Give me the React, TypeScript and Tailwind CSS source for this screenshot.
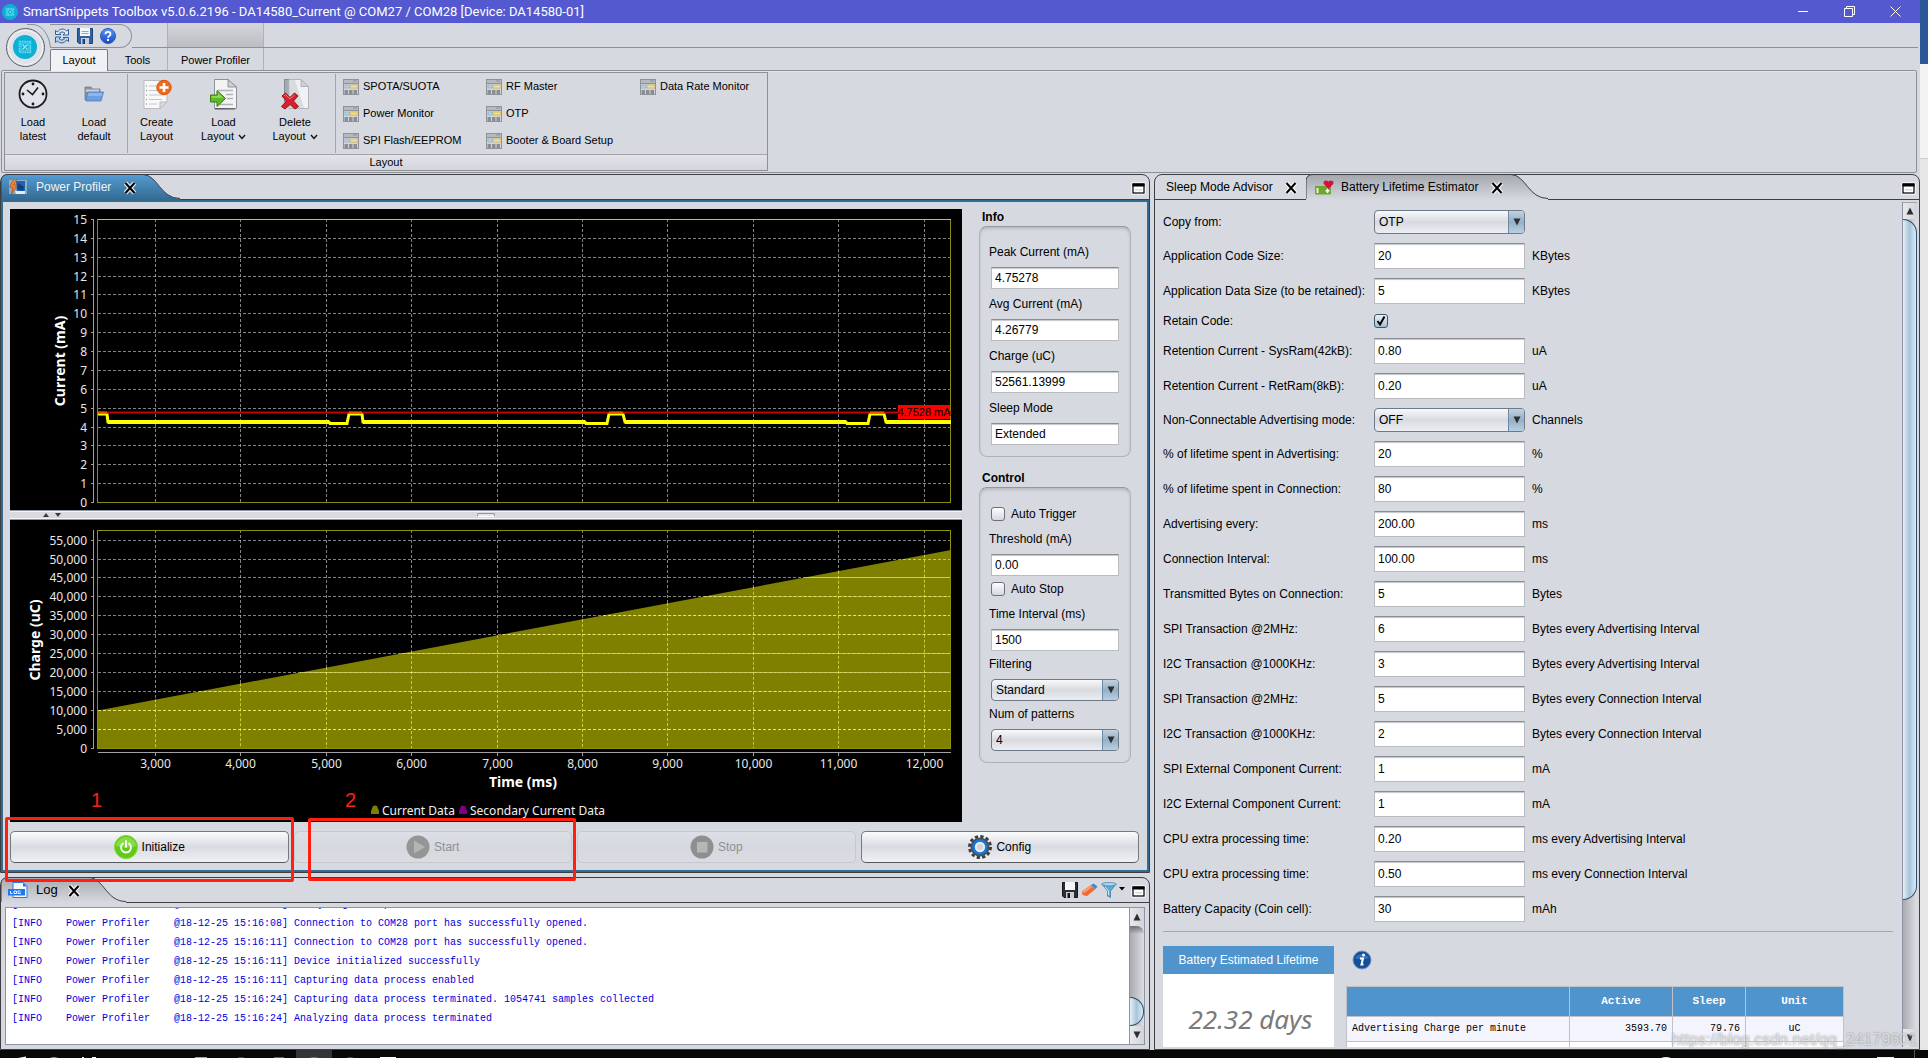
import React from "react";

/* ---------- small icons ---------- */

function ChipLogo({ className }: { className: string }) {
  return (
    <svg viewBox="0 0 24 24" className={className} aria-hidden="true">
      <circle cx="12" cy="12" r="12" fill="#0bb0d4" />
      <rect x="6.5" y="6.5" width="11" height="11" fill="none" stroke="#7fe0f2" strokeWidth="1.4" strokeDasharray="1.6 0.8" />
      <rect x="8" y="8" width="8" height="8" fill="none" stroke="#7fe0f2" strokeWidth="0.8" />
      <path d="M9.5 14.5l5-5M9.5 9.5l2 2M12.8 12.8l1.8 1.8" stroke="#a5ecf8" strokeWidth="1.1" />
    </svg>
  );
}

function OrbCurve() {
  return (
    <svg width="52" height="46" viewBox="0 0 52 46" className="absolute top-0 left-0" aria-hidden="true">
      <path d="M27 1.500H34C43 3 49 12 50.500 24.500" fill="none" stroke="#8e9097" />
      <circle cx="25.500" cy="24.500" r="19" fill="#dfe1e8" stroke="#5d5f66" />
      <circle cx="25.500" cy="24.500" r="17" fill="none" stroke="#f2f3f6" />
      <circle cx="25" cy="24" r="12" fill="#0bb0d4" />
      <rect x="19.500" y="18.500" width="11" height="11" fill="none" stroke="#6fdcf0" strokeWidth="1.500" strokeDasharray="1.600 0.800" />
      <rect x="21" y="20" width="8" height="8" fill="none" stroke="#6fdcf0" strokeWidth="0.800" />
      <path d="M22.500 26.500l5-5M22.500 21.500l2 2M25.800 24.800l1.800 1.800" stroke="#a5ecf8" strokeWidth="1.100" />
    </svg>
  );
}

function RefreshIcon() {
  return (
    <svg width="16" height="16" viewBox="0 0 16 16" aria-hidden="true">
      <path d="M1.500 6.500V2.500L3.500 4C6 .300 10 .300 12.500 3L14.500 1.500V7H9L11 5.200C9 3.500 7 3.600 5.500 5.200L7 6.500z" fill="#e3edf8" stroke="#2c5f9e" />
      <path d="M14.500 9.500V13.500L12.500 12C10 15.700 6 15.700 3.500 13L1.500 14.500V9H7L5 10.800C7 12.500 9 12.400 10.500 10.800L9 9.500z" fill="#bcd4ee" stroke="#2c5f9e" />
    </svg>
  );
}

function FloppyIcon({ dark }: { dark?: boolean }) {
  const body = dark ? "#2b2e33" : "#2c62a6";
  const edge = dark ? "#15171a" : "#1c4278";
  return (
    <svg width="16" height="16" viewBox="0 0 16 16" aria-hidden="true">
      <path d="M.5.5H15.500V15.500H2L.5 14z" fill={body} stroke={edge} />
      <rect x="3" y="0" width="10" height="8" fill="#f4f6f8" />
      {!dark && <path d="M4.500 3.500H11.500M4.500 5.500H11.500" stroke="#93a9c4" />}
      <rect x="4" y="10" width="8" height="6" fill="#c9ced6" />
      <rect x="5.500" y="11" width="2.500" height="5" fill={edge} />
    </svg>
  );
}

function HelpIcon() {
  return (
    <svg width="16" height="16" viewBox="0 0 16 16" aria-hidden="true">
      <defs>
        <linearGradient id="help" x1="0" y1="0" x2="0" y2="1">
          <stop offset="0" stopColor="#5c9bf0" />
          <stop offset="1" stopColor="#1747c4" />
        </linearGradient>
      </defs>
      <circle cx="8" cy="8" r="7.500" fill="url(#help)" stroke="#2a58c0" />
      <path d="M5.500 6.200C5.500 3.200 10.500 3.200 10.500 6.200C10.500 7.800 8 8 8 9.800" fill="none" stroke="#fff" strokeWidth="1.800" />
      <rect x="7" y="11" width="2" height="2" fill="#fff" />
    </svg>
  );
}

function ClockIcon() {
  return (
    <svg width="30" height="30" viewBox="0 0 30 30" aria-hidden="true">
      <circle cx="15" cy="15" r="13.500" fill="#e1e3ea" stroke="#1b1b1b" strokeWidth="1.800" />
      <path d="M9 11l5.500 4.500L20 8.500" fill="none" stroke="#1b1b1b" strokeWidth="1.600" />
      <g fill="#1b1b1b">
        <circle cx="15" cy="5" r="1.400" />
        <circle cx="15" cy="25" r="1.400" />
        <circle cx="5" cy="15" r="1.400" />
        <circle cx="25" cy="15" r="1.400" />
      </g>
    </svg>
  );
}

function FolderIcon() {
  return (
    <svg width="20" height="18" viewBox="0 0 20 18" aria-hidden="true">
      <path d="M1 2H7L8.500 4H16V15H1z" fill="#8d949d" stroke="#757c86" strokeWidth="0.800" />
      <path d="M2 4.500H15V7H2z" fill="#c9d0d8" />
      <path d="M3.500 7H19.500L17 16H2z" fill="#6d9fdc" stroke="#4b7fc0" strokeWidth="0.800" />
      <path d="M4.500 8H18.300L17.400 11H3.800z" fill="#8fb8e8" />
    </svg>
  );
}

function CreateIcon() {
  return (
    <svg width="30" height="32" viewBox="0 0 30 32" aria-hidden="true">
      <path d="M2 2.500H25V24L18 30.500H2z" fill="#f8f8f9" stroke="#b9bbc1" />
      <path d="M25 24H18V30.500z" fill="#d9dade" stroke="#b9bbc1" />
      <path d="M7 8H15M7 12.500H20M7 17H21M7 21.500H20M7 26H15" stroke="#c3c5ca" strokeWidth="1.200" />
      <path d="M4 8H5M4 12.500H5M4 17H5M4 21.500H5M4 26H5" stroke="#9ea1a8" strokeWidth="1.400" />
      <circle cx="22" cy="9.500" r="7.200" fill="#f26a1b" stroke="#d9540c" />
      <path d="M22 5V14M17.500 9.500H26.500" stroke="#fff" strokeWidth="2.600" />
    </svg>
  );
}

function LoadIcon() {
  return (
    <svg width="30" height="32" viewBox="0 0 30 32" aria-hidden="true">
      <path d="M5.500 1.500H19L27.500 9V30.500H5.500z" fill="#f3f3f4" stroke="#8f9197" />
      <path d="M19 1.500V9H27.500z" fill="#cfd1d5" stroke="#8f9197" />
      <path d="M9 12.500H24M17 16.500H24M18 20.500H24M9 26.500H24" stroke="#b0b3b8" strokeWidth="1.300" />
      <path d="M6 30L26 30.500V31.500H6z" fill="#55585e" />
      <path d="M1.500 17H8V12.500L16.500 20.500L8 28.500V24H1.500z" fill="#5fba28" stroke="#357d12" />
      <path d="M2.500 18H9V15L14 19.800H2.500z" fill="#8fdb55" />
    </svg>
  );
}

function DeleteIcon() {
  return (
    <svg width="30" height="32" viewBox="0 0 30 32" aria-hidden="true">
      <path d="M4.500 1.500H18V24H4.500z" fill="#a7aab0" stroke="#868990" />
      <path d="M9 1.500H21L28.500 8.500V30.500H9z" fill="#f0f1f2" stroke="#b0b3b9" />
      <path d="M21 1.500V8.500H28.500z" fill="#d0d2d6" stroke="#b0b3b9" />
      <path d="M9.500 2H15L24 30H9.500z" fill="#cfd3d6" opacity="0.700" />
      <path d="M2 18L5.500 15L10 19.500L14.500 15L18 18L13.500 23L18.500 28.500L15 31L10 26.500L5 31L1.500 28.500L6.500 23z" fill="#d6222c" stroke="#9c0f18" />
      <path d="M4 18L5.500 16.800L10 21L14.500 16.800" fill="none" stroke="#f07d83" />
    </svg>
  );
}

function LayoutIcon() {
  return (
    <svg width="16" height="16" viewBox="0 0 16 16" aria-hidden="true">
      <rect x="0.500" y="0.500" width="15" height="15" fill="#d2d4d8" stroke="#8f9298" />
      <rect x="1" y="1" width="14" height="3" fill="#b6b9be" />
      <path d="M10 2H14M1 4.500H15" stroke="#8f9298" />
      <rect x="2" y="6" width="4" height="3" fill="#a8dcf5" stroke="#7d9cb0" strokeWidth="0.500" />
      <rect x="7" y="6" width="8" height="3" fill="#f7df82" stroke="#b89c4c" strokeWidth="0.500" />
      <rect x="1.500" y="11" width="3.500" height="4" fill="#8a8d93" />
      <rect x="6" y="11" width="3.500" height="4" fill="#8a8d93" />
      <rect x="10.500" y="11" width="3.500" height="4" fill="#8a8d93" />
    </svg>
  );
}

function ProfilerIcon() {
  return (
    <svg width="20" height="16" viewBox="0 0 20 16" aria-hidden="true">
      <rect x="1" y="1" width="18" height="14" fill="#aebccb" opacity="0.700" />
      <path d="M8 2H17V14H9z" fill="#1e62b4" />
      <path d="M10 4L16 8L15 12L9 10z" fill="#0f3f80" />
      <path d="M6 0L1.500 8H5L3.500 15.500L9 6H5.500L9 0z" fill="#f48a2a" stroke="#c74e12" strokeWidth="0.800" />
      <path d="M7 12H17V15H8z" fill="#e6edf4" />
    </svg>
  );
}

function BatteryIcon() {
  return (
    <svg width="19" height="15" viewBox="0 0 19 15" aria-hidden="true">
      <rect x="0" y="6" width="16" height="8.500" rx="1" fill="#6aa72d" />
      <rect x="1.500" y="8" width="2" height="5" fill="#e6f2d5" />
      <path d="M12.500 8.500V13M10.500 10.700H14.500" stroke="#fff" strokeWidth="1.500" />
      <path d="M13.500 9L8.800 4C7.500 1.500 10.500-.800 13.500 1.500C16.500-.800 19.500 1.500 18.200 4z" fill="#d3143a" />
    </svg>
  );
}

function LogFileIcon() {
  return (
    <svg width="20" height="16" viewBox="0 0 20 16" aria-hidden="true">
      <path d="M5 .500H15L19 4.500V15.500H5z" fill="#f4f8ff" stroke="#2b7be4" />
      <path d="M15 .500V4.500H19z" fill="#2b7be4" />
      <rect x="0" y="7" width="17" height="6.500" fill="#1f78ee" />
      <path d="M2.500 9V11.500H4.500M6 9H8.500V11.500H6zM12.500 9H10V11.500H12.500V10.500" fill="none" stroke="#fff" strokeWidth="0.900" />
    </svg>
  );
}

function CloseX() {
  return (
    <svg width="16" height="16" viewBox="0 0 16 16" aria-hidden="true">
      <path d="M3.500 3L12.500 13M12.500 3L3.500 13" stroke="#fff" strokeWidth="4.500" opacity="0.850" />
      <path d="M3.500 3L12.500 13M12.500 3L3.500 13" stroke="#000" strokeWidth="2" />
    </svg>
  );
}

function MaximizeIcon() {
  return (
    <svg width="15" height="13" viewBox="0 0 15 13" aria-hidden="true">
      <rect x="0" y="0" width="15" height="13" rx="2" fill="#fff" opacity="0.600" />
      <rect x="2" y="2" width="11" height="9" fill="#fff" stroke="#000" strokeWidth="1.200" />
      <rect x="1.500" y="1.500" width="12" height="3" fill="#000" />
      <rect x="4" y="7" width="7" height="1.500" fill="#d6d9e0" />
    </svg>
  );
}

function PowerIcon() {
  return (
    <svg width="24" height="24" viewBox="0 0 24 24" aria-hidden="true">
      <circle cx="12" cy="12" r="11.500" fill="#62c916" stroke="#7edb3a" />
      <path d="M2 11A10 9 0 0 1 22 11Q12 14 2 11z" fill="#a0e86a" opacity="0.600" />
      <path d="M9 8.500A5 5 0 1 0 15 8.500" fill="none" stroke="#fff" strokeWidth="1.800" strokeLinecap="round" />
      <path d="M12 6V12" stroke="#fff" strokeWidth="1.800" strokeLinecap="round" />
    </svg>
  );
}

function PlayIcon() {
  return (
    <svg width="24" height="24" viewBox="0 0 24 24" aria-hidden="true">
      <circle cx="12" cy="12" r="11.500" fill="#959595" />
      <path d="M8 5.500L19 12L8 18.500z" fill="#b3b4b6" />
    </svg>
  );
}

function StopIcon() {
  return (
    <svg width="24" height="24" viewBox="0 0 24 24" aria-hidden="true">
      <circle cx="12" cy="12" r="11.500" fill="#8f8f90" />
      <rect x="7" y="7" width="10.500" height="10.500" fill="#b5b6b8" />
    </svg>
  );
}

function GearIcon() {
  return (
    <svg width="24" height="24" viewBox="0 0 24 24" aria-hidden="true">
      <circle cx="12" cy="12" r="10.500" fill="none" stroke="#3c3f42" strokeWidth="3" strokeDasharray="3.200 2.300" />
      <circle cx="12" cy="12" r="9.500" fill="#4c5053" />
      <circle cx="12" cy="12" r="6.500" fill="#e9ecef" stroke="#1678d8" strokeWidth="2.600" />
      <circle cx="12" cy="12" r="3" fill="#d0d3d8" />
    </svg>
  );
}

function EraserIcon() {
  return (
    <svg width="17" height="16" viewBox="0 0 17 16" aria-hidden="true">
      <path d="M1 9.500L10 3L14.500 7L6 14L1.500 13z" fill="#ef6a3a" />
      <path d="M1 9.500L10 3L12 4.500L3.500 11z" fill="#fb9a6b" />
      <path d="M10 3L12.500 1.500L16.500 4.500L14.500 7z" fill="#2e8fd6" />
    </svg>
  );
}

function FunnelIcon() {
  return (
    <svg width="16" height="16" viewBox="0 0 16 16" aria-hidden="true">
      <path d="M.800 2L6.500 9V14L9.500 15.500V9L15.200 2z" fill="#5fa9d6" stroke="#3f7fa8" strokeWidth="0.800" />
      <ellipse cx="8" cy="2.200" rx="7.200" ry="1.700" fill="#a9d8ee" stroke="#3f7fa8" strokeWidth="0.700" />
      <path d="M4 5L7.500 9V13" stroke="#d5eefa" fill="none" />
    </svg>
  );
}

function InfoIcon() {
  return (
    <svg width="20" height="28" viewBox="0 0 20 28" role="img" aria-label="Information">
      <circle cx="10" cy="14" r="9" fill="#154f9c" stroke="#6f93bd" />
      <path d="M3 12A7.500 6 0 0 1 17 12Q10 15 3 12z" fill="#4684cc" opacity="0.600" />
      <circle cx="11.500" cy="9" r="1.500" fill="#fff" />
      <path d="M8 12.500H11L9.500 18.500H11.500" fill="none" stroke="#fff" strokeWidth="2" />
    </svg>
  );
}

function Triangle({ up }: { up?: boolean }) {
  return (
    <svg width="8" height="8" viewBox="0 0 8 8" aria-hidden="true">
      <path d={up ? "M4 0.500L7.500 7.500H0.500z" : "M4 7.500L7.500 0.500H0.500z"} fill="#2e2f33" />
    </svg>
  );
}

function Chevron() {
  return (
    <svg width="8" height="6" viewBox="0 0 8 6" className="ml-1 inline-block" aria-hidden="true">
      <path d="M1 1L4 4.500L7 1" fill="none" stroke="#111" strokeWidth="1.400" />
    </svg>
  );
}

/* ---------- form controls ---------- */

const inset = "shadow-[inset_0_2px_1px_-1px_#c4c6ca]";

function TextBox({ id, value, size }: { id: string; value: string; size: "sm" | "md" }) {
  return (
    <input
      id={id}
      type="text"
      defaultValue={value}
      className={`w-full min-w-0 border border-[#b9bbc0] border-t-[#8a8c91] bg-white px-[3px] text-xs text-black outline-none ${inset} ${size === "sm" ? "h-[22px]" : "h-[26px]"}`}
    />
  );
}

function Combo({ id, value, size }: { id: string; value: string; size: "sm" | "md" }) {
  return (
    <div
      className={`relative flex w-full overflow-hidden rounded-[4px] border border-[#6e7a88] bg-linear-to-b from-[#f8f9fb] via-[#d8dae0] to-[#eceef3] ${size === "sm" ? "h-[22px]" : "h-6"}`}
    >
      <select id={id} defaultValue={value} className="h-full w-full appearance-none bg-transparent pl-1 text-xs text-black outline-none">
        <option>{value}</option>
      </select>
      <span className="pointer-events-none absolute inset-y-0 right-0 flex w-4 items-center justify-center border-l border-[#6b8aa5] bg-linear-to-b from-[#c3d2df] via-[#94b0c6] to-[#b8d0e3]">
        <Triangle />
      </span>
    </div>
  );
}

function Tick({ id, checked }: { id: string; checked?: boolean }) {
  return (
    <span className="relative flex size-[14px]">
      <input
        id={id}
        type="checkbox"
        defaultChecked={checked}
        className="peer size-[14px] appearance-none rounded-[3px] border border-[#6c7079] bg-linear-to-b from-[#fdfdfe] to-[#d5d8df] checked:border-[#3c566e] checked:from-[#eef3f8] checked:to-[#a5bdd1]"
      />
      <svg viewBox="0 0 14 14" className="pointer-events-none absolute inset-0 hidden peer-checked:block" aria-hidden="true">
        <path d="M3.500 7L6 10.500L10.500 2.500" fill="none" stroke="#000" strokeWidth="2" />
      </svg>
    </span>
  );
}

/* ---------- ribbon ---------- */

function BigButton({ icon, top, bottom, menu, className }: { icon: React.ReactNode; top: string; bottom: string; menu?: boolean; className: string }) {
  return (
    <button type="button" className={`flex flex-col items-center pt-[5px] leading-[14px] ${className}`}>
      <span className="mb-[5px] flex h-8 items-center justify-center">{icon}</span>
      <span>{top}</span>
      <span>
        {bottom}
        {menu && <Chevron />}
      </span>
    </button>
  );
}

const tools = ["SPOTA/SUOTA", "RF Master", "Data Rate Monitor", "Power Monitor", "OTP", "", "SPI Flash/EEPROM", "Booter & Board Setup"];

function Ribbon() {
  return (
    <header className="relative text-[11px] text-black">
      <div className="flex h-[25px]">
        <div className="mt-px ml-[50px] flex w-[82px] items-center gap-[7px] rounded-r-full border-y border-r border-[#8e9097] pl-1">
          <button type="button" aria-label="Refresh"><RefreshIcon /></button>
          <button type="button" aria-label="Save"><FloppyIcon /></button>
          <button type="button" aria-label="Help"><HelpIcon /></button>
        </div>
        <div className="flex flex-1 border-b border-[#8e9097] pl-[35px]">
          <div className="w-[97px] border-x border-[#b0b2b8] bg-linear-to-b from-[#d4d6dc] to-[#bcbdc1]" />
        </div>
        <div className="w-[2px]" />
      </div>
      <OrbCurve />
      <nav className="flex h-[22px] items-stretch pl-[50px]">
        <button type="button" className="z-10 mt-px -mb-px w-[58px] rounded-t-[2px] border border-b-0 border-[#77797f] bg-[#f0f1f5]">Layout</button>
        <button type="button" className="w-[59px] pt-[2px]">Tools</button>
        <button type="button" className="w-[97px] border-x border-[#b0b2b8] pt-[2px]">Power Profiler</button>
      </nav>
      <div className="mr-[3px] ml-px flex rounded-[2px] border border-[#8e9097] py-px pl-[2px] shadow-[inset_0_1px_0_#e3e5ea]">
        <section className="border border-[#8e9097]">
          <div className="flex h-[81px]">
            <BigButton className="w-14" icon={<ClockIcon />} top="Load" bottom="latest" />
            <BigButton className="w-[66px]" icon={<FolderIcon />} top="Load" bottom="default" />
            <div className="my-px w-px bg-[#a3a5ab]" />
            <BigButton className="w-[57px]" icon={<CreateIcon />} top="Create" bottom="Layout" />
            <BigButton className="w-[77px]" icon={<LoadIcon />} top="Load" bottom="Layout" menu />
            <BigButton className="w-[66px]" icon={<DeleteIcon />} top="Delete" bottom="Layout" menu />
            <div className="my-px ml-[7px] w-px bg-[#a3a5ab]" />
            <div className="grid grid-cols-[143px_154px_127px] grid-rows-3 pl-[7px]">
              {tools.map((name, i) =>
                name ? (
                  <button key={i} type="button" className="flex items-center gap-1 whitespace-nowrap">
                    <LayoutIcon />
                    {name}
                  </button>
                ) : (
                  <span key={i} />
                ),
              )}
            </div>
          </div>
          <h2 className="border-t border-[#a3a5ab] bg-linear-to-b from-[#e2e4e9] to-[#d3d5db] text-center leading-[15px]">Layout</h2>
        </section>
      </div>
    </header>
  );
}

/* ---------- charts ---------- */

const xTicks = [3000, 4000, 5000, 6000, 7000, 8000, 9000, 10000, 11000, 12000];
const tickX = (v: number) => Math.round(145 + ((v - 3000) / 1000) * 85.4) + 0.5;
const chartFont = "font-['Noto_Sans'] text-[12px]";
const fmt = (n: number) => n.toLocaleString("en-US");

function CurrentChart() {
  const y = (v: number) => Math.round(293 - v * 18.87) + 0.5;
  return (
    <svg viewBox="0 0 952 301" className={`block h-auto w-full bg-black ${chartFont}`} role="img" aria-label="Current (mA)">
      <g stroke="#c8c8c8" strokeOpacity="0.650" strokeDasharray="3 2">
        {xTicks.map((t) => (
          <path key={t} d={`M${tickX(t)} 10V293`} />
        ))}
        {Array.from({ length: 14 }, (_, i) => (
          <path key={i} d={`M88 ${y(i + 1)}H941`} />
        ))}
      </g>
      <rect x="87.500" y="10.500" width="853" height="283" fill="none" stroke="#8a8a10" />
      <path d="M88 10.500H941" stroke="#c8c820" />
      <path d="M83.500 10V294" stroke="#a0a0a0" />
      {Array.from({ length: 16 }, (_, i) => (
        <g key={i}>
          <path d={`M81 ${y(i)}H84`} stroke="#a0a0a0" />
          <text x="77" y={y(i) + 4.5} textAnchor="end" fill="#e8e8e8">{i}</text>
        </g>
      ))}
      <path d="M88 205H97L98 213H319L320 214.500H337L339 205H352L353 213H575L576 214.500H597L599 205H613L615 213H836L837 214.500H858L860 205H874L876 213H941" fill="none" stroke="#ffff00" strokeWidth="3" />
      <path d="M98 213H319M353 213H575M615 213H836M876 213H941" stroke="#ffff00" strokeWidth="4" />
      <path d="M88 203.500H941" stroke="#c40000" strokeWidth="2" />
      <path d="M88 203.500H97M339 203.500H352M599 203.500H613M860 203.500H874" stroke="#e85a00" strokeWidth="2" />
      <rect x="888" y="196" width="52" height="14" fill="#ff0000" />
      <text x="914" y="207" textAnchor="middle" className="font-['Liberation_Sans'] text-[11px]" fill="#000">4.7528 mA</text>
      <text transform="translate(55 152) rotate(-90)" textAnchor="middle" className="text-[14px] font-bold" fill="#fff">Current (mA)</text>
    </svg>
  );
}

function ChargeChart() {
  const y = (k: number) => Math.round(228 - k * 3.79) + 0.5;
  return (
    <svg viewBox="0 0 952 302" className={`block h-auto w-full bg-black ${chartFont}`} role="img" aria-label="Charge (uC)">
      <path d="M88 190.500L941 30V228.500H88z" fill="#808000" />
      <g stroke="#ffffff" strokeOpacity="0.500" strokeDasharray="3 2">
        {xTicks.map((t) => (
          <path key={t} d={`M${tickX(t)} 10V${190 - (tickX(t) - 88) * 0.188}`} />
        ))}
        {Array.from({ length: 11 }, (_, i) => (
          <path key={i} d={`M88 ${y(5 * (i + 1))}H941`} />
        ))}
      </g>
      <g stroke="#ffff60" strokeOpacity="0.600" strokeDasharray="3 2">
        {xTicks.map((t) => (
          <path key={t} d={`M${tickX(t)} ${190 - (tickX(t) - 88) * 0.188}V228`} />
        ))}
        {Array.from({ length: 9 }, (_, i) => {
          const line = y(5 * (i + 1));
          return <path key={i} d={`M${Math.max(88, 88 + (190.5 - line) / 0.188)} ${line}H941`} />;
        })}
      </g>
      <rect x="87.500" y="10.500" width="853" height="218" fill="none" stroke="#8f8f08" />
      <path d="M83.500 10V229M88 232.500H941" stroke="#a0a0a0" />
      {Array.from({ length: 12 }, (_, i) => (
        <g key={i}>
          <path d={`M81 ${y(5 * i)}H84`} stroke="#a0a0a0" />
          <text x="77" y={y(5 * i) + 4.5} textAnchor="end" fill="#e8e8e8">{fmt(i * 5000)}</text>
        </g>
      ))}
      {xTicks.map((t) => (
        <g key={t}>
          <path d={`M${tickX(t)} 233V236`} stroke="#a0a0a0" />
          <text x={tickX(t)} y="248" textAnchor="middle" fill="#e8e8e8">{fmt(t)}</text>
        </g>
      ))}
      <text x="513" y="267" textAnchor="middle" className="text-[14px] font-bold" fill="#fff">Time (ms)</text>
      <text transform="translate(30 120) rotate(-90)" textAnchor="middle" className="text-[14px] font-bold" fill="#fff">Charge (uC)</text>
      <path d="M361 294V291L363 286Q365 285 367 286L369 291V294z" fill="#808000" />
      <text x="372" y="295" fill="#f0f0f0">Current Data</text>
      <path d="M449 294V291L451 286Q453 285 455 286L457 291V294z" fill="#800080" />
      <text x="460" y="295" fill="#f0f0f0">Secondary Current Data</text>
    </svg>
  );
}

/* ---------- panels ---------- */

function LabeledBox({ id, label, children }: { id: string; label: string; children: React.ReactNode }) {
  return (
    <div className="flex flex-col gap-[7px]">
      <label htmlFor={id} className="leading-4">{label}</label>
      <div className="pl-[2px]">{children}</div>
    </div>
  );
}

const groupBox = "rounded-lg border border-[#b0b2b8] border-t-[#9496a0] pr-[11px] pb-[11px] pl-[9px] shadow-[inset_0_2px_3px_#b9bbc2]";

function SidePanel() {
  const info: [string, string][] = [
    ["Peak Current (mA)", "4.75278"],
    ["Avg Current (mA)", "4.26779"],
    ["Charge (uC)", "52561.13999"],
    ["Sleep Mode", "Extended"],
  ];
  return (
    <aside className="w-40 shrink-0 pr-2">
      <h3 className="pl-[3px] leading-4 font-bold">Info</h3>
      <div className={`mt-px flex flex-col gap-[7px] pt-[17px] ${groupBox}`}>
        {info.map(([label, value], i) => (
          <LabeledBox key={label} id={`info-${i}`} label={label}>
            <TextBox id={`info-${i}`} value={value} size="sm" />
          </LabeledBox>
        ))}
      </div>
      <h3 className="mt-[13px] pl-[3px] leading-4 font-bold">Control</h3>
      <div className={`mt-px flex flex-col gap-[5px] pt-[18px] ${groupBox}`}>
        <div className="mb-1 flex h-4 items-center gap-[6px] pl-[2px]">
          <Tick id="trigger" />
          <label htmlFor="trigger">Auto Trigger</label>
        </div>
        <LabeledBox id="threshold" label="Threshold (mA)">
          <TextBox id="threshold" value="0.00" size="sm" />
        </LabeledBox>
        <div className="mb-1 flex h-4 items-center gap-[6px] pl-[2px]">
          <Tick id="autostop" />
          <label htmlFor="autostop">Auto Stop</label>
        </div>
        <LabeledBox id="interval" label="Time Interval (ms)">
          <TextBox id="interval" value="1500" size="sm" />
        </LabeledBox>
        <LabeledBox id="filtering" label="Filtering">
          <Combo id="filtering" value="Standard" size="sm" />
        </LabeledBox>
        <LabeledBox id="patterns" label="Num of patterns">
          <Combo id="patterns" value="4" size="sm" />
        </LabeledBox>
      </div>
    </aside>
  );
}

function ActionButton({ icon, label, disabled }: { icon: React.ReactNode; label: string; disabled?: boolean }) {
  return (
    <button
      type="button"
      disabled={disabled}
      className="flex h-8 items-center justify-center gap-1 rounded-[5px] border border-[#77797f] border-b-[#55575c] bg-linear-to-b from-[#fafbfc] via-[#d9dbe1] to-[#f0f1f5] disabled:border-[#c6c8ce] disabled:from-[#dcdfe5] disabled:via-[#d5d8de] disabled:to-[#dadce2] disabled:text-[#8e9096]"
    >
      {icon}
      {label}
    </button>
  );
}

/** Tab outline with the sloping right edge; the stroke runs along the visible border. */
function TabShape({ width, from, to, id }: { width: number; from: string; to: string; id: string }) {
  const w = width;
  const slope = `M0 25V6Q1 0.500 7 0.500H${w - 37}C${w - 22} 1 ${w - 20} 24.500 ${w} 24.500`;
  return (
    <svg width={w} height="26" viewBox={`0 0 ${w} 26`} className="absolute -top-px left-0" aria-hidden="true">
      <defs>
        <linearGradient id={id} x1="0" y1="0" x2="0" y2="1">
          <stop offset="0" stopColor={from} />
          <stop offset="1" stopColor={to} />
        </linearGradient>
      </defs>
      <path d={`${slope}V26H0z`} fill={`url(#${id})`} />
      <path d={slope} fill="none" stroke="#3d3e42" />
    </svg>
  );
}

function PowerProfiler() {
  return (
    <section className="relative rounded-t-lg border border-[#3d3e42]">
      <div className="relative flex h-[25px] items-center border-b border-[#3d3e42]">
        <TabShape id="tab-profiler" width={179} from="#559bd3" to="#336a90" />
        <div className="relative flex flex-1 items-center pl-[7px] text-[#f1f4f7]">
          <ProfilerIcon />
          <span className="pl-2">Power Profiler</span>
          <button type="button" aria-label="Close Power Profiler" className="mt-[2px] ml-[11px]"><CloseX /></button>
        </div>
        <button type="button" aria-label="Maximize" className="relative mt-[2px] mr-[3px]"><MaximizeIcon /></button>
      </div>
      <div className="border-2 border-[#336a90] pt-[7px] pr-2 pb-[7px] pl-[7px]">
        <div className="flex gap-[17px]">
          <div className="min-w-0 flex-1">
            <CurrentChart />
            <div className="flex h-[10px] items-center border-y border-[#8e93a3] bg-[#d8dae0] shadow-[inset_0_1px_0_#f4f5f7,inset_0_-1px_0_#f4f5f7]">
              <svg width="18" height="6" viewBox="0 0 18 6" className="ml-[33px]" aria-hidden="true">
                <path d="M3 1L6 5H0zM15 5L18 1H12z" fill="#3a3b40" />
              </svg>
              <div className="ml-[416px] h-1 w-[18px] rounded-[2px] border border-[#8e93a3] border-b-white bg-[#e4e6ec]" />
            </div>
            <ChargeChart />
          </div>
          <SidePanel />
        </div>
        <div className="mt-[9px] grid grid-cols-4 gap-[5px]">
          <ActionButton icon={<PowerIcon />} label="Initialize" />
          <ActionButton icon={<PlayIcon />} label="Start" disabled />
          <ActionButton icon={<StopIcon />} label="Stop" disabled />
          <ActionButton icon={<GearIcon />} label="Config" />
        </div>
      </div>
      <div className="pointer-events-none absolute top-[613px] left-[90px] text-xl leading-6 text-[#ff1e10]">1</div>
      <div className="pointer-events-none absolute top-[613px] left-[344px] text-xl leading-6 text-[#ff1e10]">2</div>
      <div className="pointer-events-none absolute top-[642px] left-1 z-10 h-[65px] w-[289px] rounded-[2px] border-3 border-[#ff1e10]" />
      <div className="pointer-events-none absolute top-[643px] left-[307px] z-10 h-[63px] w-[268px] rounded-[2px] border-3 border-[#ff1e10]" />
    </section>
  );
}

const logLines: [string, string][] = [
  ["15:16:08", "Analyzing data process started"],
  ["15:16:08", "Connection to COM28 port has successfully opened."],
  ["15:16:11", "Connection to COM28 port has successfully opened."],
  ["15:16:11", "Device initialized successfully"],
  ["15:16:11", "Capturing data process enabled"],
  ["15:16:24", "Capturing data process terminated. 1054741 samples collected"],
  ["15:16:24", "Analyzing data process terminated"],
];

function LogPanel() {
  return (
    <section className="flex min-h-0 flex-1 flex-col rounded-t-lg border border-[#3d3e42]">
      <div className="relative flex h-[25px] shrink-0 items-center border-b border-[#3d3e42]">
        <TabShape id="tab-log" width={125} from="#a9abb0" to="#d6d9e0" />
        <div className="relative flex flex-1 items-center pl-[7px] text-[13px]">
          <LogFileIcon />
          <span className="pl-2">Log</span>
          <button type="button" aria-label="Close Log" className="mt-[2px] ml-[8px]"><CloseX /></button>
        </div>
        <div className="flex items-center gap-[3px] pr-[3px]">
          <button type="button" aria-label="Save log"><FloppyIcon dark /></button>
          <button type="button" aria-label="Clear log"><EraserIcon /></button>
          <button type="button" aria-label="Filter log" className="flex items-start">
            <FunnelIcon />
            <svg width="8" height="12" viewBox="0 0 8 12" className="ml-px" aria-hidden="true">
              <path d="M1 5H7L4 8.500z" fill="#000" />
            </svg>
          </button>
          <button type="button" aria-label="Maximize log" className="mt-[2px] ml-[2px]"><MaximizeIcon /></button>
        </div>
      </div>
      <div className="flex min-h-0 flex-1 p-1">
        <div className="flex min-h-0 flex-1 border border-[#8e93a3] bg-white">
          <div className="flex min-w-0 flex-1 flex-col justify-end overflow-hidden pb-4 pl-[6px] font-['Liberation_Mono'] text-[10px] leading-[19px] whitespace-pre text-[#0000e0]">
            {logLines.map(([time, msg], i) => (
              <p key={i} className="shrink-0">{`[INFO    Power Profiler    @18-12-25 ${time}] ${msg}`}</p>
            ))}
          </div>
          <div className="flex w-[15px] flex-col border-l border-[#8e93a3] bg-linear-to-r from-[#a9abb1] to-[#dcdee3]">
            <button type="button" aria-label="Scroll up" className="flex h-[18px] items-center justify-center bg-linear-to-r from-[#e8e9ec] to-[#d2d4da]"><Triangle up /></button>
            <div className="h-2 rounded-tr-full bg-linear-to-b from-[#6e7076] to-transparent" />
            <div className="flex-1" />
            <div className="h-[29px] rounded-r-full border border-l-0 border-[#2f4f6b] bg-linear-to-r from-[#e6eff6] via-[#a9c4da] to-[#d5ecf8]" />
            <button type="button" aria-label="Scroll down" className="flex h-[18px] items-center justify-center bg-linear-to-r from-[#e8e9ec] to-[#d2d4da]"><Triangle /></button>
          </div>
        </div>
      </div>
    </section>
  );
}

type Field = { label: string; value: string; unit?: string; kind?: "select" | "check" };

const fields: Field[] = [
  { label: "Copy from:", value: "OTP", kind: "select" },
  { label: "Application Code Size:", value: "20", unit: "KBytes" },
  { label: "Application Data Size (to be retained):", value: "5", unit: "KBytes" },
  { label: "Retain Code:", value: "", kind: "check" },
  { label: "Retention Current - SysRam(42kB):", value: "0.80", unit: "uA" },
  { label: "Retention Current - RetRam(8kB):", value: "0.20", unit: "uA" },
  { label: "Non-Connectable Advertising mode:", value: "OFF", unit: "Channels", kind: "select" },
  { label: "% of lifetime spent in Advertising:", value: "20", unit: "%" },
  { label: "% of lifetime spent in Connection:", value: "80", unit: "%" },
  { label: "Advertising every:", value: "200.00", unit: "ms" },
  { label: "Connection Interval:", value: "100.00", unit: "ms" },
  { label: "Transmitted Bytes on Connection:", value: "5", unit: "Bytes" },
  { label: "SPI Transaction @2MHz:", value: "6", unit: "Bytes every Advertising Interval" },
  { label: "I2C Transaction @1000KHz:", value: "3", unit: "Bytes every Advertising Interval" },
  { label: "SPI Transaction @2MHz:", value: "5", unit: "Bytes every Connection Interval" },
  { label: "I2C Transaction @1000KHz:", value: "2", unit: "Bytes every Connection Interval" },
  { label: "SPI External Component Current:", value: "1", unit: "mA" },
  { label: "I2C External Component Current:", value: "1", unit: "mA" },
  { label: "CPU extra processing time:", value: "0.20", unit: "ms every Advertising Interval" },
  { label: "CPU extra processing time:", value: "0.50", unit: "ms every Connection Interval" },
  { label: "Battery Capacity (Coin cell):", value: "30", unit: "mAh" },
];

function FieldControl({ field, id }: { field: Field; id: string }) {
  if (field.kind === "select") return <Combo id={id} value={field.value} size="md" />;
  if (field.kind === "check")
    return (
      <div className="flex h-4 items-center">
        <Tick id={id} checked />
      </div>
    );
  return <TextBox id={id} value={field.value} size="md" />;
}

function ResultTable() {
  const cell = "border border-[#c0c2c8] px-[5px]";
  return (
    <table className="w-[498px] table-fixed border-collapse font-['Liberation_Mono'] text-[10px] text-black">
      <thead className="bg-[#4f94cd] text-[11px] text-white">
        <tr className="h-[30px]">
          <th className={`w-[223px] ${cell}`} aria-label="Quantity" />
          <th className={`w-[103px] ${cell}`}>Active</th>
          <th className={`w-[73px] ${cell}`}>Sleep</th>
          <th className={cell}>Unit</th>
        </tr>
      </thead>
      <tbody>
        <tr className="h-[25px] bg-[#f4f4ff]">
          <td className={cell}>Advertising Charge per minute</td>
          <td className={`text-right ${cell}`}>3593.70</td>
          <td className={`text-right ${cell}`}>79.76</td>
          <td className={`text-center ${cell}`}>uC</td>
        </tr>
        <tr className="h-[25px] bg-white">
          <td className={cell} />
          <td className={cell} />
          <td className={cell} />
          <td className={cell} />
        </tr>
      </tbody>
    </table>
  );
}

function EstimatorPanel() {
  return (
    <section className="relative flex min-h-0 min-w-0 shrink grow-[764] basis-0 flex-col rounded-t-lg border border-[#3d3e42]">
      <div className="flex h-[25px] shrink-0 items-center border-b border-[#3d3e42]">
        <div className="flex w-[151px] items-center pl-[11px]">
          <span>Sleep Mode Advisor</span>
          <button type="button" aria-label="Close Sleep Mode Advisor" className="mt-[2px] ml-[10px]"><CloseX /></button>
        </div>
        <div className="relative flex h-full flex-1 items-center">
          <TabShape id="tab-estimator" width={242} from="#a4a6ab" to="#d6d9e0" />
          <div className="relative flex items-center pl-[9px]">
            <BatteryIcon />
            <span className="pl-[7px]">Battery Lifetime Estimator</span>
            <button type="button" aria-label="Close Battery Lifetime Estimator" className="mt-[2px] ml-[11px]"><CloseX /></button>
          </div>
        </div>
        <button type="button" aria-label="Maximize estimator" className="mt-[2px] mr-[3px]"><MaximizeIcon /></button>
      </div>
      <div className="flex min-h-0 flex-1 pt-[2px] pr-[2px] pb-[2px]">
        <div className="min-w-0 flex-1 overflow-hidden pt-2 pr-[9px] pl-2">
          <form className="flex flex-col gap-[9px]">
            {fields.map((f, i) => (
              <div key={i} className="grid grid-cols-[211px_151px_1fr] items-center whitespace-nowrap">
                <label htmlFor={`field-${i}`}>{f.label}</label>
                <FieldControl field={f} id={`field-${i}`} />
                <span className="pl-[7px]">{f.unit}</span>
              </div>
            ))}
          </form>
          <hr className="mt-[9px] border-[#a3a8b4]" />
          <div className="mt-[14px] flex gap-3">
            <div className="flex w-[171px] flex-col text-center">
              <h3 className="bg-[#4f94cd] leading-7 text-white">Battery Estimated Lifetime</h3>
              <p className="flex h-[90px] items-center justify-center bg-white pl-1 font-['Noto_Sans'] text-[26px] text-[#7a7a7a] italic">22.32 days</p>
            </div>
            <div>
              <div className="mb-3 h-7 pl-[6px]"><InfoIcon /></div>
              <ResultTable />
            </div>
          </div>
        </div>
        <div className="flex w-[15px] flex-col border-l border-[#8e93a3] bg-linear-to-r from-[#a9abb1] to-[#dcdee3]">
          <button type="button" aria-label="Scroll form up" className="flex h-[17px] items-center justify-center border-t border-[#a3a5ab] bg-linear-to-r from-[#e8e9ec] to-[#d2d4da]"><Triangle up /></button>
          <div className="grow-[84] rounded-r-[14px] border border-l-0 border-[#2f4f6b] bg-linear-to-r from-[#e6eff6] via-[#a9c4da] to-[#d5ecf8]" />
          <div className="grow-[16]" />
          <button type="button" aria-label="Scroll form down" className="flex h-[18px] items-center justify-center bg-linear-to-r from-[#e8e9ec] to-[#d2d4da]"><Triangle /></button>
        </div>
      </div>
      <a href="#source" className="absolute right-[2px] -bottom-px text-base leading-5 text-white/60 [text-shadow:0_0_2px_#808080]">https://blog.csdn.net/qq_24179601</a>
    </section>
  );
}

/* ---------- page ---------- */

function TitleBar() {
  return (
    <div className="flex h-[23px] items-center bg-[#5459cf] pl-[2px] text-white">
      <ChipLogo className="size-4" />
      <h1 className="flex-1 pl-[5px] font-['Roboto'] text-[13px]">SmartSnippets Toolbox v5.0.6.2196 - DA14580_Current @ COM27 / COM28 [Device: DA14580-01]</h1>
      <div className="flex">
        <button type="button" aria-label="Minimize window" className="flex w-[46px] justify-center">
          <svg width="10" height="10" viewBox="0 0 10 10"><path d="M0 5.500H10" stroke="#fff" /></svg>
        </button>
        <button type="button" aria-label="Restore window" className="flex w-[46px] justify-center">
          <svg width="11" height="11" viewBox="0 0 11 11"><path d="M.5 2.500H8.500V10.500H.5zM2.500 2.500V.5H10.500V8.500H8.500" fill="none" stroke="#fff" /></svg>
        </button>
        <button type="button" aria-label="Close window" className="flex w-[46px] justify-center">
          <svg width="11" height="11" viewBox="0 0 11 11"><path d="M.5.5L10.500 10.500M10.500.5L.5 10.500" stroke="#fff" /></svg>
        </button>
      </div>
      <div className="w-[2px]" />
    </div>
  );
}

function Taskbar() {
  return (
    <footer className="flex h-2 shrink-0 justify-between bg-[#080808]">
      <svg width="420" height="8" viewBox="0 0 420 8" aria-hidden="true">
        <rect x="296" width="36" height="8" fill="#333435" />
        <path d="M18 8L26 6.500V8zM380 7H396V8H380zM82 7H84V8H82zM92 7H96V8H92z" fill="#fff" />
        <path d="M195 7H207V8H195z" fill="#f09030" />
        <path d="M50 8Q54 6 58 8z" fill="#999" />
        <path d="M237 8Q241 6 245 8z" fill="#a03820" />
        <path d="M274 7H284V8H274z" fill="#666" />
        <path d="M309 8Q314 6 319 8z" fill="#18a0b8" />
        <path d="M346 8Q350 6 354 8z" fill="#3858a0" />
      </svg>
      <svg width="270" height="8" viewBox="0 0 270 8" aria-hidden="true">
        <path d="M3 8Q8 6 13 8zM219 7H236V8H219z" fill="#eee" />
        <path d="M256.500 0V8" stroke="#555" />
      </svg>
    </footer>
  );
}

export default function App() {
  return (
    <div className="flex h-screen flex-col overflow-hidden bg-[#d6d9e0] font-['Liberation_Sans',sans-serif] text-xs text-black">
      <div className="flex min-h-0 flex-1">
        <div className="flex min-w-0 flex-1 flex-col">
          <TitleBar />
          <Ribbon />
          <main className="mt-px flex min-h-0 flex-1 gap-1">
            <div className="flex min-h-0 min-w-0 shrink grow-[1150] basis-0 flex-col gap-1">
              <PowerProfiler />
              <LogPanel />
            </div>
            <EstimatorPanel />
          </main>
        </div>
        <div className="flex w-2 flex-col bg-[#e6e6e6]">
          <div className="h-16 bg-[#2b579a]" />
          <div className="h-[95px] border-b border-[#cfcfcf] bg-[#f3f3f3]" />
        </div>
      </div>
      <Taskbar />
    </div>
  );
}
